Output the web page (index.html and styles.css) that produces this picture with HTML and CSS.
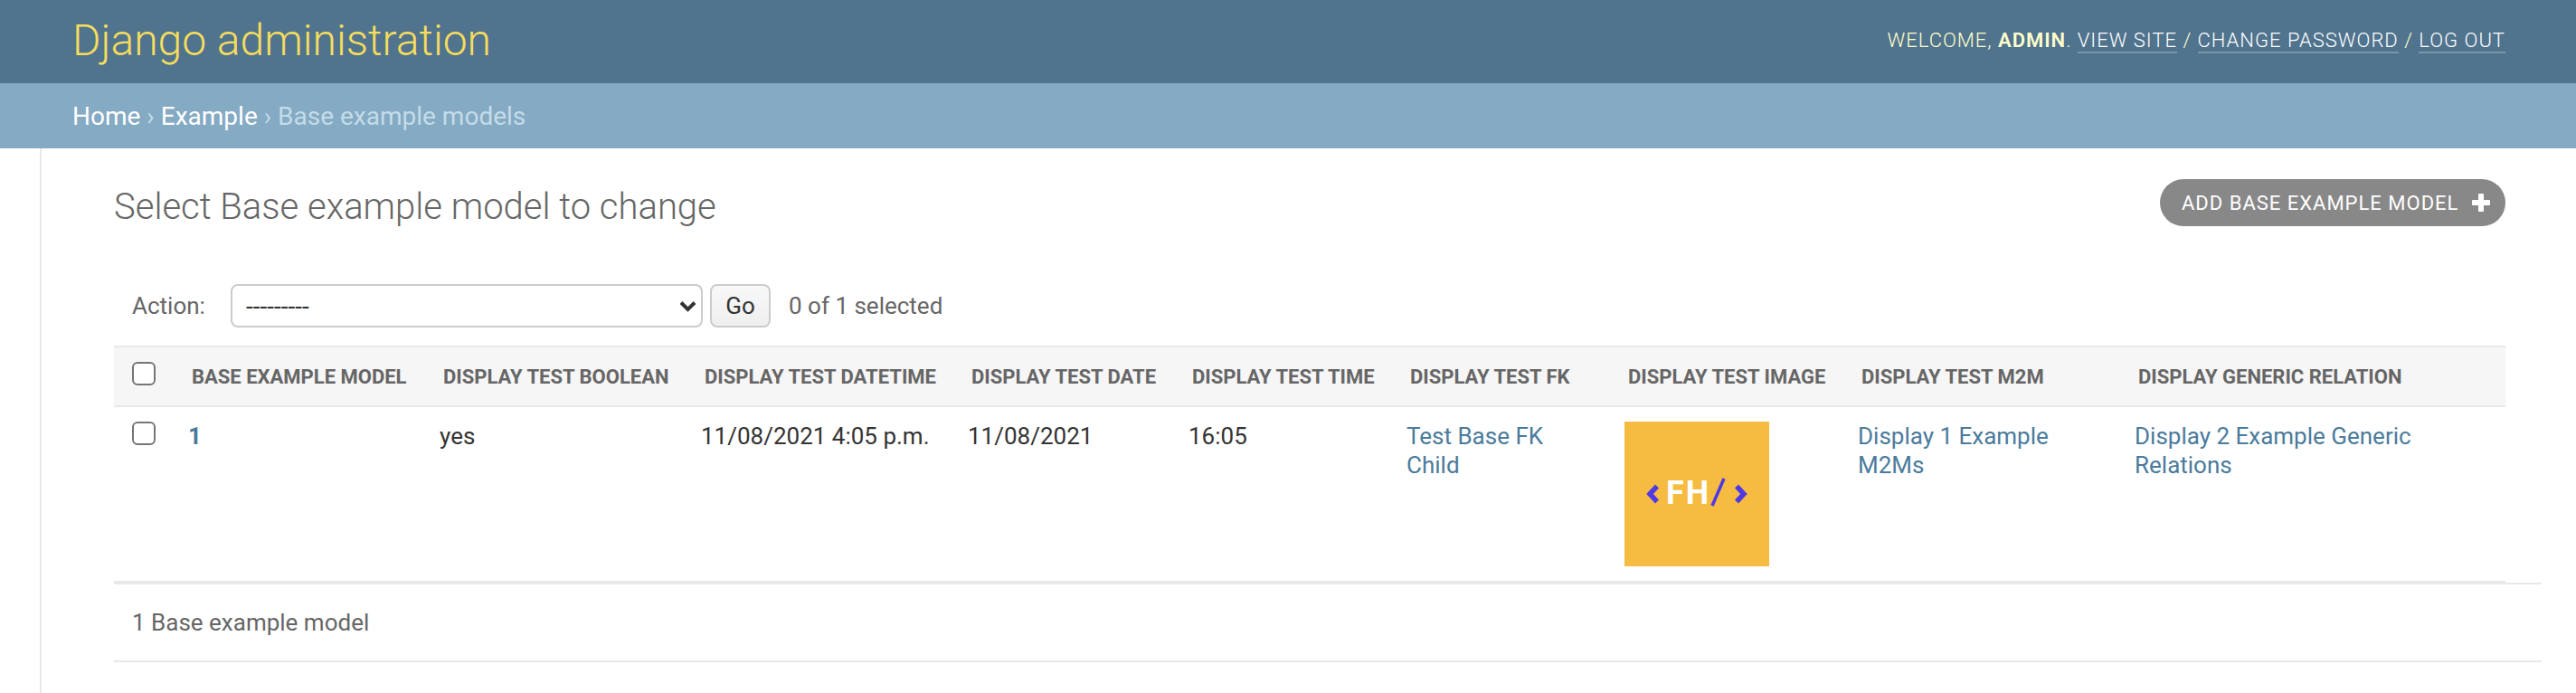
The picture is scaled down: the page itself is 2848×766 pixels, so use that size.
FILE: index.html
```html
<!DOCTYPE html>
<html lang="en">
<head>
<meta charset="utf-8">
<title>Select Base example model to change</title>
<link rel="stylesheet" href="styles.css">
</head>
<body>
<header class="site-header">
  <a class="brand" href="#">Django administration</a>
  <div class="user-tools">
    Welcome, <strong>admin</strong>. <a href="#">View site</a> / <a href="#">Change password</a> / <a href="#">Log out</a>
  </div>
</header>
<nav class="breadcrumbs">
  <a href="#">Home</a> › <a href="#">Example</a> › Base example models
</nav>
<div class="main">
  <div class="nav-toggle"></div>
  <main class="content">
    <div class="title-row">
      <h1>Select Base example model to change</h1>
      <a class="addlink" href="#">Add base example model
        <svg class="plus" viewBox="0 0 24 24" aria-hidden="true"><path d="M10 2h4a1 1 0 0 1 1 1v6h6a1 1 0 0 1 1 1v4a1 1 0 0 1-1 1h-6v6a1 1 0 0 1-1 1h-4a1 1 0 0 1-1-1v-6H3a1 1 0 0 1-1-1v-4a1 1 0 0 1 1-1h6V3a1 1 0 0 1 1-1z"/></svg>
      </a>
    </div>
    <div class="actions">
      <label class="action-label">Action:</label>
      <select class="action-select"><option>---------</option></select>
      <button class="go" type="button">Go</button>
      <span class="counter">0 of 1 selected</span>
    </div>
    <table class="results">
      <colgroup>
        <col class="c-check"><col class="c-id"><col class="c-bool"><col class="c-datetime"><col class="c-date"><col class="c-time"><col class="c-fk"><col class="c-image"><col class="c-m2m"><col class="c-generic">
      </colgroup>
      <thead>
        <tr>
          <th class="check-cell"><input class="check" type="checkbox"></th>
          <th>Base example model</th>
          <th>Display test boolean</th>
          <th>Display test datetime</th>
          <th>Display test date</th>
          <th>Display test time</th>
          <th>Display test FK</th>
          <th>Display test image</th>
          <th>Display test M2M</th>
          <th>Display generic relation</th>
        </tr>
      </thead>
      <tbody>
        <tr>
          <td class="check-cell"><input class="check" type="checkbox"></td>
          <td><a class="id-link" href="#">1</a></td>
          <td>yes</td>
          <td>11/08/2021 4:05 p.m.</td>
          <td>11/08/2021</td>
          <td>16:05</td>
          <td><a href="#">Test Base FK Child</a></td>
          <td>
            <svg class="logo" viewBox="0 0 160 160" role="img" aria-label="FH logo">
              <rect width="160" height="160" fill="#f5bc41"/>
              <path class="logo-mark" d="M36 71.500L28 80L36 88.500"/>
              <path class="logo-mark" d="M124 71.500L132 80L124 88.500"/>
              <text class="logo-text" x="46" y="91">FH</text>
              <path class="logo-slash" d="M110 63L97 93"/>
            </svg>
          </td>
          <td><a href="#">Display 1 Example M2Ms</a></td>
          <td><a href="#">Display 2 Example Generic Relations</a></td>
        </tr>
      </tbody>
    </table>
    <p class="paginator">1 Base example model</p>
  </main>
</div>
</body>
</html>
```
FILE: styles.css
```css
* { box-sizing: border-box; }
html, body { margin: 0; padding: 0; }
body {
  background: #fff;
  color: #333;
  font-family: Roboto, "Liberation Sans", sans-serif;
  font-size: 28px;
  height: 766px;
  overflow: hidden;
}
a { text-decoration: none; }

.site-header {
  height: 92px;
  background: #50738e;
  color: #ffc;
  display: flex;
  align-items: center;
  justify-content: space-between;
  padding: 0 78px 4px 80px;
}
.brand {
  color: #f5dd5d;
  font-size: 48px;
  font-weight: 300;
}
.user-tools {
  font-size: 22px;
  font-weight: 300;
  letter-spacing: 1px;
  text-transform: uppercase;
  white-space: nowrap;
}
.user-tools strong { font-weight: 600; }
.user-tools a {
  color: #fff;
  border-bottom: 2px solid rgba(255, 255, 255, .25);
}

.breadcrumbs {
  height: 72px;
  background: #85aac4;
  color: #c4dce8;
  font-weight: 400;
  font-size: 28px;
  display: flex;
  align-items: center;
  gap: 7px;
  padding: 0 80px;
}
.breadcrumbs a { color: #fff; font-weight: 400; }

.main { display: flex; height: 602px; }
.nav-toggle {
  flex: 0 0 46px;
  border-right: 2px solid #e8e8e8;
}
.content {
  flex: 1;
  padding: 0 38px 0 80px;
}
.title-row {
  display: flex;
  justify-content: space-between;
  align-items: flex-start;
  padding: 34px 40px 0 0;
  height: 150px;
}
h1 {
  margin: 4px 0 0;
  color: #666;
  font-size: 40px;
  font-weight: 300;
  line-height: 54px;
}
.addlink {
  height: 52px;
  width: 382px;
  border-radius: 26px;
  background: #888;
  color: #fff;
  font-size: 22px;
  letter-spacing: 1px;
  text-transform: uppercase;
  display: flex;
  align-items: center;
  justify-content: space-between;
  padding: 0 15px 0 24px;
  white-space: nowrap;
}
.plus { width: 24px; height: 24px; fill: #fff; flex: none; }

.actions {
  display: flex;
  align-items: center;
  height: 48px;
  margin-bottom: 20px;
  padding-left: 20px;
  color: #666;
  font-size: 26px;
}
.action-label { width: 109px; }
.action-select {
  appearance: none;
  width: 522px;
  height: 48px;
  font: 28px Roboto, sans-serif;
  color: #333;
  padding: 0 15px;
  background: #fff url("data:image/svg+xml,%3Csvg xmlns='http://www.w3.org/2000/svg' width='19' height='13' viewBox='0 0 19 13'%3E%3Cpath d='M2 2.500L9.500 10L17 2.500' fill='none' stroke='%23333' stroke-width='4'/%3E%3C/svg%3E") no-repeat right 5px center;
  border: 2px solid #ccc;
  border-radius: 8px;
}
.go {
  width: 67px;
  height: 48px;
  margin: 0 20px 0 8px;
  font: 26px Roboto, sans-serif;
  color: #333;
  background: linear-gradient(#f8f8f8, #efefef);
  border: 2px solid #ccc;
  border-radius: 8px;
  padding: 0;
}

.results {
  width: 2644px;
  table-layout: fixed;
  border-collapse: separate;
  border-spacing: 0;
}
.c-check { width: 66px; }
.c-id { width: 278px; }
.c-bool { width: 289px; }
.c-datetime { width: 295px; }
.c-date { width: 244px; }
.c-time { width: 241px; }
.c-fk { width: 241px; }
.c-image { width: 258px; }
.c-m2m { width: 306px; }
.c-generic { width: 426px; }

th {
  height: 68px;
  padding: 0 0 0 20px;
  text-align: left;
  vertical-align: middle;
  background: #f6f6f6;
  border-top: 2px solid #e8e8e8;
  border-bottom: 2px solid #e8e8e8;
  color: #666;
  font-size: 22px;
  font-weight: 700;
  text-transform: uppercase;
  white-space: nowrap;
}
td {
  height: 194px;
  padding: 16px 16px 16px;
  vertical-align: top;
  line-height: 32px;
  font-size: 26px;
  color: #333;
  border-bottom: 2px solid #e8e8e8;
}
td a { color: #4b7b9c; }
.id-link { font-weight: 700; }
th.check-cell { padding: 16px 0 0 20px; vertical-align: top; }
td.check-cell { padding: 16px 0 0 20px; }
.check {
  appearance: none;
  display: block;
  width: 26px;
  height: 26px;
  margin: 0;
  background: #fff;
  border: 2px solid #767676;
  border-radius: 6px;
}
.logo { display: block; width: 160px; height: 160px; }
.logo-mark { fill: none; stroke: #4f39e6; stroke-width: 5.500; }
.logo-slash { fill: none; stroke: #4f39e6; stroke-width: 3.500; }
.logo-text { fill: #fff; font: 700 36px Roboto, sans-serif; letter-spacing: 2px; }

.paginator {
  margin: 0;
  height: 88px;
  border-top: 2px solid #e8e8e8;
  border-bottom: 2px solid #e8e8e8;
  color: #666;
  font-size: 26px;
  display: flex;
  align-items: center;
  padding-left: 20px;
}
```
